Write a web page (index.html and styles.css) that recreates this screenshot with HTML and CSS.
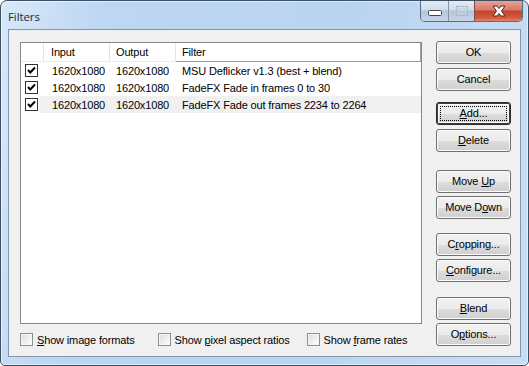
FILE: index.html
```html
<!DOCTYPE html>
<html>
<head>
<meta charset="utf-8">
<link rel="stylesheet" href="styles.css">
</head>
<body>
<div class="window">
  <div class="titlebar">
    <div class="title">Filters</div>
    <div class="capbtns">
      <div class="cap cap-min"><svg width="14" height="6" viewBox="0 0 14 6"><rect x="0.5" y="0.5" width="13" height="5" rx="1" fill="#fff" stroke="#3b4a5c"/></svg></div>
      <div class="cap cap-max"><svg width="12" height="10" viewBox="0 0 12 10"><rect x="0.5" y="0.5" width="11" height="9" fill="none" stroke="#aebccb"/><rect x="2.5" y="2.5" width="7" height="5" fill="none" stroke="#c6d2de"/></svg></div>
      <div class="cap cap-close"><svg width="16" height="12" viewBox="0 0 16 12"><path d="M2 1 H6 L8 3.5 L10 1 H14 L10.5 6 L14 11 H10 L8 8.5 L6 11 H2 L5.5 6 Z" fill="#fff" stroke="#5a231c" stroke-width="1" stroke-linejoin="round"/></svg></div>
    </div>
  </div>
  <div class="client">
    <div class="leftpane">
      <div class="list">
        <div class="row header">
          <div class="c-chk hcell"></div>
          <div class="c-in hcell">Input</div>
          <div class="c-out hcell">Output</div>
          <div class="c-filter hcell last">Filter</div>
        </div>
        <div class="row">
          <div class="c-chk"><span class="lchk"><svg width="11" height="11" viewBox="0 0 11 11"><polyline points="2,5 4.3,7.5 9,2.5" fill="none" stroke="#000" stroke-width="2"/></svg></span></div>
          <div class="c-in">1620x1080</div>
          <div class="c-out">1620x1080</div>
          <div class="c-filter">MSU Deflicker v1.3 (best + blend)</div>
        </div>
        <div class="row">
          <div class="c-chk"><span class="lchk"><svg width="11" height="11" viewBox="0 0 11 11"><polyline points="2,5 4.3,7.5 9,2.5" fill="none" stroke="#000" stroke-width="2"/></svg></span></div>
          <div class="c-in">1620x1080</div>
          <div class="c-out">1620x1080</div>
          <div class="c-filter">FadeFX Fade in frames 0 to 30</div>
        </div>
        <div class="row selected">
          <div class="c-chk"><span class="lchk"><svg width="11" height="11" viewBox="0 0 11 11"><polyline points="2,5 4.3,7.5 9,2.5" fill="none" stroke="#000" stroke-width="2"/></svg></span></div>
          <div class="c-in">1620x1080</div>
          <div class="c-out">1620x1080</div>
          <div class="c-filter">FadeFX Fade out frames 2234 to 2264</div>
        </div>
      </div>
      <div class="options">
        <label class="opt"><span class="chk"></span><span><u>S</u>how image formats</span></label>
        <label class="opt opt2"><span class="chk"></span><span>Show <u>p</u>ixel aspect ratios</span></label>
        <label class="opt opt3"><span class="chk"></span><span>Show <u>f</u>rame rates</span></label>
      </div>
    </div>
    <div class="buttons">
      <div class="btn"><span>OK</span></div>
      <div class="btn b-cancel"><span>Cancel</span></div>
      <div class="btn focused b-add"><span class="focus"><span><u>A</u>dd...</span></span></div>
      <div class="btn b-pair"><span><u>D</u>elete</span></div>
      <div class="btn b-up"><span>Move <u>U</u>p</span></div>
      <div class="btn b-pair"><span>Move D<u>o</u>wn</span></div>
      <div class="btn b-crop"><span>C<u>r</u>opping...</span></div>
      <div class="btn b-pair"><span><u>C</u>onfigure...</span></div>
      <div class="btn b-blend"><span><u>B</u>lend</span></div>
      <div class="btn b-pair"><span>O<u>p</u>tions...</span></div>
    </div>
  </div>
</div>
</body>
</html>
```

FILE: styles.css
```css
html, body {
  margin: 0;
  padding: 0;
  background: #ffffff;
}
body {
  font-family: "Liberation Sans", Arial, sans-serif;
  font-size: 11px;
  letter-spacing: -0.15px;
  color: #000;
}
.window {
  width: 529px;
  height: 366px;
  box-sizing: border-box;
  border: 1px solid #3d4f63;
  border-radius: 7px 7px 5px 5px;
  background: linear-gradient(100deg, #d8e8f9 0%, #bcd6f3 18%, #b9d4f1 60%, #c9def4 100%);
  box-shadow: inset 0 0 0 1px rgba(255,255,255,0.55);
  overflow: hidden;
}
.titlebar {
  height: 28px;
  display: flex;
  justify-content: space-between;
  align-items: flex-start;
}
.title {
  padding: 8px 0 0 7px;
  font-family: "Open Sans", "Liberation Sans", sans-serif;
  font-size: 11.5px;
  color: #1e2b3a;
  letter-spacing: -0.1px;
}
.capbtns {
  display: flex;
  margin-right: 5px;
  height: 20px;
  border: 1px solid #5b6d82;
  border-top: none;
  border-radius: 0 0 5px 5px;
  overflow: hidden;
}
.cap {
  height: 20px;
  display: flex;
  align-items: center;
  justify-content: center;
}
.cap-min {
  width: 27px;
  background: linear-gradient(#e3ecf6 0%, #cfdceb 45%, #b4c6da 50%, #c7d6e6 100%);
  border-right: 1px solid #8595a8;
}
.cap-min svg { margin-top: 4px; }
.cap-max {
  width: 25px;
  background: linear-gradient(#e3ecf6 0%, #cfdceb 45%, #b4c6da 50%, #c7d6e6 100%);
  border-right: 1px solid #7a4a44;
}
.cap-close {
  width: 47px;
  background: linear-gradient(#e7a594 0%, #d7786a 45%, #c4432f 50%, #d35a3f 85%, #e08a6f 100%);
}
.client {
  margin: 0 7px 0 7px;
  height: 328px;
  box-sizing: border-box;
  border: 1px solid #8596a8;
  background: #f0f0f0;
  display: flex;
  padding: 12px 0 0 11px;
}
.leftpane {
  width: 402px;
  display: flex;
  flex-direction: column;
}
.list {
  height: 282px;
  box-sizing: border-box;
  border: 1px solid #828790;
  background: #fff;
}
.row {
  display: flex;
  height: 17px;
  align-items: center;
}
.row.header {
  height: 18px;
  border-bottom: 1px solid #ececec;
}
.hcell {
  height: 18px;
  line-height: 18px;
  box-sizing: border-box;
  border-right: 1px solid #e3e3e3;
}
.hcell.last {
  border-right: 1px solid #a0a0a0;
  border-bottom: 1px solid #a0a0a0;
  height: 19px;
  align-self: flex-start;
}
.c-chk { width: 23px; flex: none; display: flex; align-items: center; }
.c-in { width: 66px; flex: none; padding-left: 7px; box-sizing: border-box; }
.c-out { width: 66px; flex: none; padding-left: 6px; box-sizing: border-box; }
.c-filter { flex: 1; padding-left: 6px; box-sizing: border-box; white-space: nowrap; }
.row:not(.header) .c-in { padding-left: 8px; }
.row.selected { background: linear-gradient(90deg, #fff 0, #fff 18px, #f0f0f0 18px); }
.lchk {
  display: block;
  margin-left: 4px;
  width: 13px;
  height: 13px;
  box-sizing: border-box;
  border: 1px solid #333;
  background: #fff;
}
.lchk svg { display: block; }
.options {
  display: flex;
  align-items: center;
  height: 31px;
}
.opt {
  display: flex;
  align-items: center;
  gap: 4px;
}
.opt2 { margin-left: 23px; }
.opt3 { margin-left: 17px; }
.chk {
  display: block;
  width: 13px;
  height: 13px;
  box-sizing: border-box;
  border: 1px solid #8f8f8f;
  background: linear-gradient(135deg, #dcdcdc 0%, #f4f4f4 70%, #fff 100%);
  box-shadow: inset 0 0 0 1px #f6f6f6;
}
.buttons {
  margin-left: 14px;
  margin-top: -1px;
  display: flex;
  flex-direction: column;
}
.btn {
  width: 75px;
  height: 23px;
  box-sizing: border-box;
  border: 1px solid #707070;
  border-radius: 3px;
  background: linear-gradient(#f2f2f2 0%, #ebebeb 50%, #dddddd 51%, #cfcfcf 100%);
  box-shadow: inset 0 0 0 1px #fcfcfc;
  display: flex;
  align-items: center;
  justify-content: center;
  line-height: 13px;
  white-space: pre;
}
.btn.focused {
  border-color: #2c2c2c;
  box-shadow: inset 0 0 0 1px #3c3c3c, inset 0 0 0 2px #fcfcfc;
}
.focus {
  display: flex;
  align-items: center;
  justify-content: center;
  width: 67px;
  height: 15px;
  box-sizing: border-box;
  border: 1px dotted #000;
}
.b-cancel { margin-top: 4px; }
.b-add { margin-top: 11px; }
.b-pair { margin-top: 4px; }
.b-up { margin-top: 18px; }
.b-up + .b-pair { margin-top: 3px; }
.b-crop { margin-top: 14px; }
.b-crop + .b-pair { margin-top: 3px; }
.b-blend { margin-top: 15px; }
.b-blend + .b-pair { margin-top: 3px; }
```
